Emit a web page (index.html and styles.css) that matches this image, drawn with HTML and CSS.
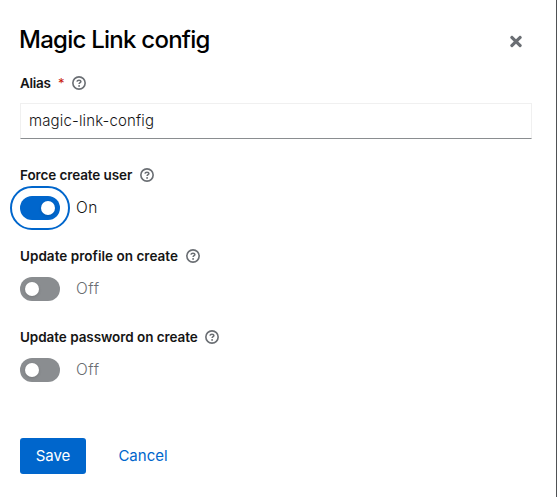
FILE: index.html
```html
<!DOCTYPE html>
<html lang="en">
<head>
<meta charset="utf-8">
<title>Magic Link config</title>
<link rel="stylesheet" href="styles.css">
</head>
<body>
<svg class="sprite" aria-hidden="true">
  <symbol id="help" viewBox="0 0 14 14">
    <circle cx="7" cy="7" r="6.15" fill="none" stroke="currentColor" stroke-width="1.6"/>
    <path d="M4.9 5.7Q5.2 4.2 7 4.2Q8.9 4.2 8.9 5.6C8.9 6.8 7.1 6.7 7.1 8.1" fill="none" stroke="currentColor" stroke-width="1.5"/>
    <circle cx="7.1" cy="9.9" r=".95" fill="currentColor"/>
  </symbol>
</svg>
<form class="modal">
  <header class="header">
    <h1 class="title">Magic Link config</h1>
    <button class="close" type="button" aria-label="Close"><svg width="12" height="17" viewBox="0 0 352 512"><path fill="currentColor" d="M242.72 256l100.07-100.07c12.28-12.28 12.28-32.19 0-44.48l-22.24-22.24c-12.28-12.28-32.19-12.28-44.48 0L176 189.28 75.93 89.21c-12.28-12.28-32.19-12.28-44.48 0L9.21 111.45c-12.28 12.28-12.28 32.19 0 44.48L109.28 256 9.21 356.07c-12.28 12.28-12.28 32.19 0 44.48l22.24 22.24c12.28 12.28 32.2 12.28 44.48 0L176 322.72l100.07 100.07c12.28 12.28 32.2 12.28 44.48 0l22.24-22.24c12.28-12.28 12.28-32.19 0-44.48L242.72 256z"/></svg></button>
  </header>
  <div class="field field-alias">
    <div class="label-row"><label class="label alias" for="alias">Alias</label><span class="required">*</span><svg class="help"><use href="#help"/></svg></div>
    <input class="input" id="alias" type="text" value="magic-link-config">
  </div>
  <div class="field">
    <div class="label-row"><span class="label force">Force create user</span><svg class="help"><use href="#help"/></svg></div>
    <div class="switch on focused"><span class="track"><span class="knob"></span></span><span class="state">On</span></div>
  </div>
  <div class="field">
    <div class="label-row"><span class="label profile">Update profile on create</span><svg class="help"><use href="#help"/></svg></div>
    <div class="switch"><span class="track"><span class="knob"></span></span><span class="state">Off</span></div>
  </div>
  <div class="field">
    <div class="label-row"><span class="label password">Update password on create</span><svg class="help"><use href="#help"/></svg></div>
    <div class="switch"><span class="track"><span class="knob"></span></span><span class="state">Off</span></div>
  </div>
  <footer class="actions">
    <button class="button save" type="button">Save</button>
    <button class="button cancel" type="button">Cancel</button>
  </footer>
</form>
</body>
</html>
```
FILE: styles.css
```css
* { box-sizing: border-box; }
body { margin: 0; background: #fff; color: #151515; font-family: Inter, "Liberation Sans", sans-serif; }
.sprite { display: none; }
.modal { height: 497px; padding: 24px 24px 0 20px; border-right: 1px solid #4f5255; overflow: hidden; }
.header { display: flex; justify-content: space-between; height: 48px; }
.title { margin: 0 0 0 -1px; font-size: 24px; line-height: 32px; font-weight: 500; letter-spacing: -0.75px; color: #000; white-space: nowrap; }
.close { width: 32px; height: 34px; padding: 0; border: 0; background: none; color: #6a6e73; display: flex; align-items: center; justify-content: center; }
.field { height: 81px; }
.field-alias { height: 92px; }
.label-row { display: flex; align-items: center; height: 22px; }
.label { font-size: 13.5px; line-height: 22px; font-weight: 600; letter-spacing: 0; white-space: nowrap; }
.alias { width: 31px; letter-spacing: -0.3px; }
.force { width: 112px; letter-spacing: -0.1px; }
.profile { width: 158px; letter-spacing: 0.03px; }
.password { width: 177px; letter-spacing: -0.06px; }
.required { width: 13px; padding-left: 7px; font-size: 13px; line-height: 22px; color: #c9190b; }
.help { width: 14px; height: 14px; margin-left: 8px; color: #6a6e73; }
.input { display: block; width: 512px; height: 36px; margin-top: 9px; padding: 0 8px 2px; border: 1px solid #f0f0f0; border-bottom-color: #8a8d90; border-radius: 0; outline: 0; font: 350 15px/24px Inter, "Liberation Sans", sans-serif; letter-spacing: 0.14px; color: #151515; }
.switch { display: flex; align-items: center; height: 24px; margin-top: 10px; color: #6a6e73; }
.track { display: block; width: 40px; height: 24px; padding: 5px; border-radius: 12px; background: #8a8d90; }
.knob { display: block; width: 14px; height: 14px; border-radius: 50%; background: #fff; box-shadow: 0 1px 3px rgba(0, 0, 0, .15); }
.on { color: #151515; }
.on .track { background: #06c; }
.on .knob { margin-left: 16px; }
.focused .track { outline: 2px solid #06c; outline-offset: 8px; }
.state { margin-left: 16px; font-size: 15.5px; line-height: 24px; font-weight: 350; letter-spacing: 0.5px; }
.actions { display: flex; margin-top: 31px; }
.button { height: 36px; padding: 0; border: 0; border-radius: 3px; font: 400 15px/24px Inter, "Liberation Sans", sans-serif; }
.save { width: 66px; background: #06c; color: #fff; }
.cancel { width: 82px; margin-left: 16px; background: none; color: #06c; }
```
